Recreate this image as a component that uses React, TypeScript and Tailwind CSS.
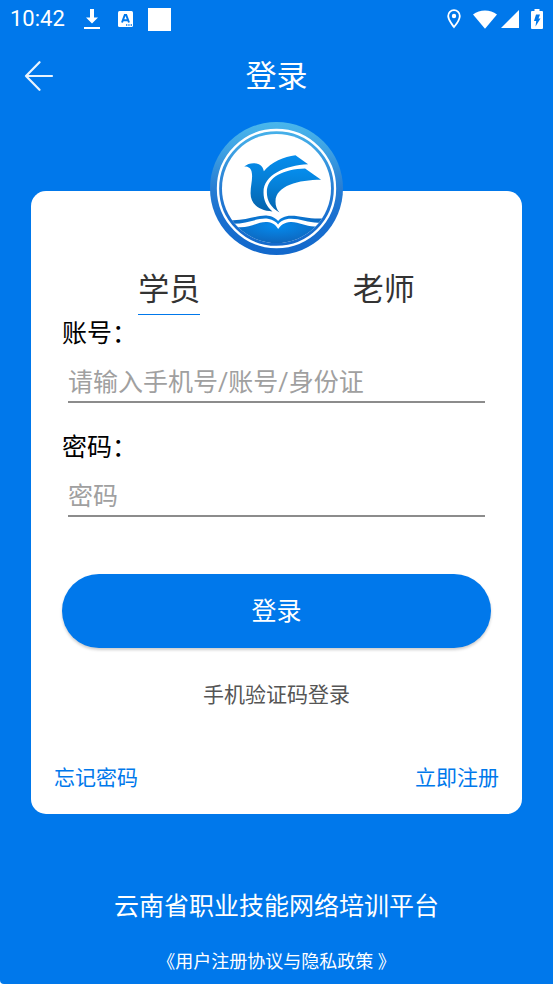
import { useState } from 'react';

const tabs = ['学员', '老师'];

function StatusBar() {
	return (
		<div className="flex h-[38px] items-center px-[10px] text-white">
			<span className="text-[22px] leading-[38px]">10:42</span>
			<svg className="ml-[19px] h-[22px] w-4" viewBox="0 0 16 22" fill="currentColor">
				<path d="M6 1h4v8.500h4L8 15.500 2 9.500h4zM0 19h16v2H0z" />
			</svg>
			<svg className="ml-[18px] h-4 w-[15px]" viewBox="0 0 15 16">
				<rect width="15" height="16" rx="1.500" fill="#fff" />
				<path d="M4 11.500 6.800 4h1.400L11 11.500M5 9.200h5" fill="none" stroke="#0078eb" strokeWidth="2" />
				<path d="M8 14h1.300M10.300 14h1.300M12.600 14H14" stroke="#0078eb" strokeWidth="1.400" />
			</svg>
			<span className="ml-[15px] size-[23px] bg-white" />
			<svg className="ml-auto h-5 w-[14px]" viewBox="0 0 14 20">
				<path
					d="M7 1.200C3.700 1.200 1.200 3.700 1.200 7c0 4.200 5.800 11 5.800 11s5.800-6.800 5.800-11c0-3.300-2.500-5.800-5.800-5.800z"
					fill="none"
					stroke="#fff"
					strokeWidth="1.800"
				/>
				<circle cx="7" cy="7" r="2.200" fill="#fff" />
			</svg>
			<svg className="ml-3 h-[19px] w-6" viewBox="0 0 24 19" fill="currentColor">
				<path d="M0 4.500C3.500 1.800 7.600.5 12 .5s8.500 1.300 12 4L12 18.800z" />
			</svg>
			<svg className="ml-1 h-[18px] w-[18px]" viewBox="0 0 18 18" fill="currentColor">
				<path d="M18 0v18H0z" />
			</svg>
			<svg className="ml-3 h-5 w-3" viewBox="0 0 12 20">
				<path d="M3.500 0h5v2H11q1 0 1 1v16q0 1-1 1H1q-1 0-1-1V3q0-1 1-1h2.500z" fill="#fff" />
				<path d="M5 5.500h4L7.500 9.500H9.500L4.500 17.500 5.200 12H3z" fill="#0078eb" />
			</svg>
		</div>
	);
}

function Logo() {
	return (
		<svg className="size-[133px]" viewBox="41 36 400 400" role="img" aria-label="云南省职业技能网络培训平台">
			<defs>
				<linearGradient id="ring" x1="0" y1="0" x2="0" y2="1">
					<stop offset="0" stopColor="#49b7ec" />
					<stop offset="0.2" stopColor="#3fa3e4" />
					<stop offset="0.5" stopColor="#277dd3" />
					<stop offset="0.7" stopColor="#1a70d0" />
					<stop offset="1" stopColor="#1268cb" />
				</linearGradient>
				<linearGradient id="bird" x1="0" y1="0" x2="0" y2="1">
					<stop offset="0" stopColor="#058ded" />
					<stop offset="0.4" stopColor="#0580d8" />
					<stop offset="1" stopColor="#0563ac" />
				</linearGradient>
				<radialGradient id="book" cx="0.5" cy="0.3" r="0.5">
					<stop offset="0" stopColor="#048bee" />
					<stop offset="1" stopColor="#0e66bd" />
				</radialGradient>
				<clipPath id="disc">
					<circle cx="241" cy="236" r="164" />
				</clipPath>
			</defs>
			<circle cx="241" cy="236" r="200" fill="url(#ring)" />
			<circle cx="241" cy="236" r="176" fill="none" stroke="#fff" strokeWidth="7" />
			<circle cx="241" cy="236" r="164" fill="#fff" />
			<path
				d="M144 170C155 160 174 157 188 163C197 167 201 174 203 184C225 157 264 140 298 136L336 163C266 167 202 195 202 247C202 271 211 289 229 305C188 303 163 282 163 250C163 226 171 205 166 185C163 173 154 169 144 170Z"
				fill="url(#bird)"
			/>
			<path
				d="M250 308C224 293 212 272 212 247C212 201 264 178 327 176L375 210C308 210 238 228 238 275C238 289 242 299 250 308Z"
				fill="url(#bird)"
			/>
			<g clipPath="url(#disc)">
				<path
					d="M90 330C145 337 185 314 215 318C232 320 241 328 246 334C252 326 265 318 285 318C318 318 345 331 395 325V420H90Z"
					fill="url(#book)"
				/>
				<path
					d="M106 342C150 344 185 323 215 327C232 330 241 338 246 344C252 335 265 327 285 327C315 327 345 342 376 338L360 350C330 352 310 336 283 337C264 338 253 347 246 358C240 347 230 339 213 337C185 335 160 356 124 352Z"
					fill="#fff"
				/>
			</g>
		</svg>
	);
}

type FieldProps = {
	id: string;
	label: string;
	placeholder: string;
	type?: string;
};

function Field({ id, label, placeholder, type = 'text' }: FieldProps) {
	return (
		<div>
			<label htmlFor={id} className="block text-[25px] leading-[37px] text-black">
				{label}
			</label>
			<div className="px-[6px]">
				<input
					id={id}
					type={type}
					placeholder={placeholder}
					className="block h-[51px] w-full border-b-2 border-[#8c8c8c] bg-transparent pt-3 pb-px text-[25px] text-[#333] outline-none placeholder:text-[#a0a0a0]"
				/>
			</div>
		</div>
	);
}

export default function App() {
	const [active, setActive] = useState(0);

	return (
		<div className="flex min-h-screen flex-col rounded-bl-[4px] bg-[#0078eb] font-[Roboto,'Noto_Sans_CJK_SC',sans-serif]">
			<StatusBar />

			<header className="grid h-[76px] grid-cols-[76px_1fr_76px] items-center text-white">
				<button type="button" aria-label="返回" className="flex h-full items-center pl-6">
					<svg className="h-[30px] w-[30px]" viewBox="0 0 30 30" fill="none" stroke="#e9f4fe" strokeWidth="2.200" strokeLinecap="round" strokeLinejoin="round">
						<path d="M28 15H2M15.500 1.200 2 15 15.500 28.800" />
					</svg>
				</button>
				<h1 className="pt-0.5 text-center text-[31px] leading-[46px]">登录</h1>
			</header>

			<main className="flex flex-col px-[31px] pt-2">
				<div className="z-10 flex justify-center">
					<Logo />
				</div>

				<form
					className="-mt-16 rounded-[15px] bg-white pt-[75px] pb-[21px]"
					onSubmit={(e) => e.preventDefault()}
				>
					<div className="px-[31px]">
						<div role="tablist" className="grid grid-cols-2 justify-items-center">
							{tabs.map((tab, index) => (
								<button
									key={tab}
									type="button"
									role="tab"
									aria-selected={active === index}
									onClick={() => setActive(index)}
									className={`h-[49px] border-b text-[31px] leading-[46px] text-[#333] ${
										active === index ? 'border-[#0078eb]' : 'border-transparent'
									}`}
								>
									{tab}
								</button>
							))}
						</div>

						<div className="flex flex-col gap-[26px]">
							<Field id="account" label="账号：" placeholder="请输入手机号/账号/身份证" />
							<Field id="password" label="密码：" placeholder="密码" type="password" />
						</div>

						<button
							type="submit"
							className="mt-[57px] block h-[74px] w-full rounded-full bg-[#0078eb] pt-0.5 text-[25px] text-white shadow-[0_2px_3px_rgba(0,0,0,0.2)]"
						>
							登录
						</button>

						<div className="mt-8 text-center text-[21px] leading-[30px]">
							<a href="#sms" className="text-[#555]">
								手机验证码登录
							</a>
						</div>
					</div>

					<div className="mt-[53px] flex justify-between px-[23px] text-[21px] leading-[30px] text-[#0078eb]">
						<a href="#forgot">忘记密码</a>
						<a href="#register">立即注册</a>
					</div>
				</form>
			</main>

			<footer className="mt-auto pb-2 text-center text-white">
				<p className="text-[25px] leading-[36px]">云南省职业技能网络培训平台</p>
				<a href="#agreement" className="mt-[23px] block text-[18px] leading-[28px]">
					《用户注册协议与隐私政策 》
				</a>
			</footer>
		</div>
	);
}
